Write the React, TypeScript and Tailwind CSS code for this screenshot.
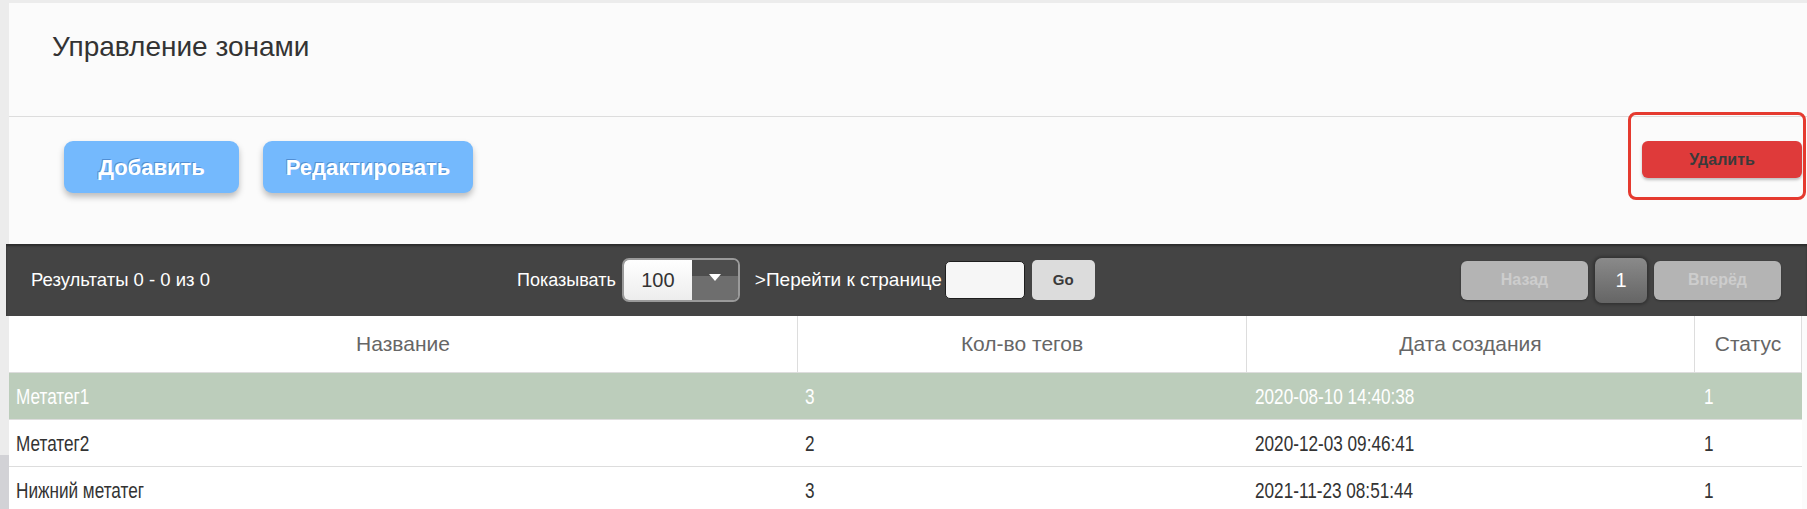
type Row = {
  name: string;
  tags: string;
  created: string;
  status: string;
  selected?: boolean;
};

const rows: Row[] = [
  { name: "Метатег1", tags: "3", created: "2020-08-10 14:40:38", status: "1", selected: true },
  { name: "Метатег2", tags: "2", created: "2020-12-03 09:46:41", status: "1" },
  { name: "Нижний метатег", tags: "3", created: "2021-11-23 08:51:44", status: "1" },
];

const columns = ["Название", "Кол-во тегов", "Дата создания", "Статус"];

function Narrow({ children }: { children: React.ReactNode }) {
  // body text in the reference is rendered noticeably condensed
  return (
    <span className="inline-block origin-left scale-x-[0.78] whitespace-nowrap">
      {children}
    </span>
  );
}

function Toolbar() {
  return (
    <div className="-ml-[3px] flex h-[72px] items-center bg-[#444444] pl-[25px] pr-[26px] text-[19px] text-white shadow-[inset_0_2px_2px_rgba(0,0,0,0.35)]">
      <div className="w-[486px] text-[18.5px]">Результаты 0 - 0 из 0</div>

      <div className="flex items-center">
        <span className="text-[18px]">Показывать</span>
        <div className="ml-[6px] flex h-[44px] w-[118px] overflow-hidden rounded-[7px] border-2 border-[#9a9a9a]">
          <div className="flex flex-1 items-center justify-center bg-gradient-to-b from-white to-[#ededed] text-[20px] text-[#333]">
            100
          </div>
          <div className="flex w-[46px] flex-col">
            <div className="h-[16px] bg-[#4d4d4d]" />
            <div className="flex flex-1 items-start justify-center bg-[#6e6e6e]">
              <svg width="12" height="8" viewBox="0 0 12 8" className="-mt-[2px]">
                <path d="M0 0 L12 0 L6 7 Z" fill="#ffffff" />
              </svg>
            </div>
          </div>
        </div>

        <span className="ml-[15px]">&gt;Перейти к странице</span>
        <div className="ml-[3px] h-[38px] w-[80px] rounded-[5px] border border-[#1e1e1e] bg-[#f6f6f6]" />
        <button
          type="button"
          className="ml-[7px] flex h-[40px] w-[63px] items-center justify-center rounded-[5px] bg-[#dcdcdc] text-[15px] font-bold text-[#3a3a3a]"
        >
          Go
        </button>
      </div>

      <div className="ml-auto flex items-center gap-[7px]">
        <button
          type="button"
          className="flex h-[39px] w-[127px] items-center justify-center rounded-[6px] bg-[#b4b4b4] text-[16px] font-bold text-[#cdcdcd] shadow-[0_1px_2px_rgba(0,0,0,0.3)]"
        >
          Назад
        </button>
        <button
          type="button"
          className="flex h-[45px] w-[52px] items-center justify-center rounded-[7px] bg-gradient-to-b from-[#8a8a8a] to-[#656565] text-[20px] text-white shadow-[0_0_3px_2px_rgba(0,0,0,0.25)]"
        >
          1
        </button>
        <button
          type="button"
          className="flex h-[39px] w-[127px] items-center justify-center rounded-[6px] bg-[#b4b4b4] text-[16px] font-bold text-[#cdcdcd] shadow-[0_1px_2px_rgba(0,0,0,0.3)]"
        >
          Вперёд
        </button>
      </div>
    </div>
  );
}

export default function App() {
  return (
    <div
      className="relative h-[509px] w-[1807px] overflow-hidden bg-[#ececec] pt-[3px]"
      style={{ fontFamily: '"Liberation Sans", Arial, sans-serif' }}
    >
      <div className="ml-[9px] min-h-[506px] bg-[#fbfbfb]">
        {/* heading */}
        <div className="h-[114px] border-b border-[#dddddd] pl-[43px] pt-[28px]">
          <h1 className="text-[28px] leading-[32px] text-[#333333]">
            Управление зонами
          </h1>
        </div>

        {/* actions */}
        <div className="flex h-[127px] items-start justify-between pl-[55px] pr-[5px] pt-[24px]">
          <div className="flex gap-[24px]">
            <button
              type="button"
              className="h-[52px] w-[175px] rounded-[9px] bg-[#74b9fd] text-[22px] font-bold text-white shadow-[0_4px_6px_rgba(0,0,0,0.25)] [text-shadow:_-1px_-1px_0_rgba(40,90,160,0.45)]"
            >
              Добавить
            </button>
            <button
              type="button"
              className="h-[52px] w-[210px] rounded-[9px] bg-[#74b9fd] text-[22px] font-bold text-white shadow-[0_4px_6px_rgba(0,0,0,0.25)] [text-shadow:_-1px_-1px_0_rgba(40,90,160,0.45)]"
            >
              Редактировать
            </button>
          </div>
          <button
            type="button"
            className="h-[37px] w-[160px] rounded-[6px] bg-[#df3a3a] text-[16px] font-bold text-[#3a3a3a] shadow-[0_2px_3px_rgba(0,0,0,0.25)]"
          >
            Удалить
          </button>
        </div>

        <Toolbar />

        {/* table */}
        <div className="w-[1793px]">
          <div className="grid h-[57px] grid-cols-[789px_449px_448px_107px] border-b border-[#dddddd] bg-white">
            {columns.map((c) => (
              <div
                key={c}
                className="flex items-center justify-center border-r border-[#dddddd] text-[21px] text-[#666666]"
              >
                {c}
              </div>
            ))}
          </div>

          {rows.map((r) => (
            <div
              key={r.name}
              className={`grid h-[47px] grid-cols-[789px_449px_448px_107px] border-b border-[#dddddd] text-[22px] ${
                r.selected ? "bg-[#bccdbb] text-white" : "bg-white text-[#333333]"
              }`}
            >
              <div className="flex items-center pl-[7px]">
                <Narrow>{r.name}</Narrow>
              </div>
              <div className="flex items-center pl-[7px]">
                <Narrow>{r.tags}</Narrow>
              </div>
              <div className="flex items-center pl-[8px]">
                <Narrow>{r.created}</Narrow>
              </div>
              <div className="flex items-center pl-[9px]">
                <Narrow>{r.status}</Narrow>
              </div>
            </div>
          ))}
        </div>
      </div>

      {/* left edge shade near the bottom */}
      <div className="absolute bottom-0 left-0 h-[54px] w-[9px] bg-[#d2d2d6]" />

      {/* highlight frame drawn around the delete button */}
      <div className="pointer-events-none absolute left-[1628px] top-[112px] h-[88px] w-[178px] rounded-[8px] border-[3px] border-[#e53a2f]" />
    </div>
  );
}
